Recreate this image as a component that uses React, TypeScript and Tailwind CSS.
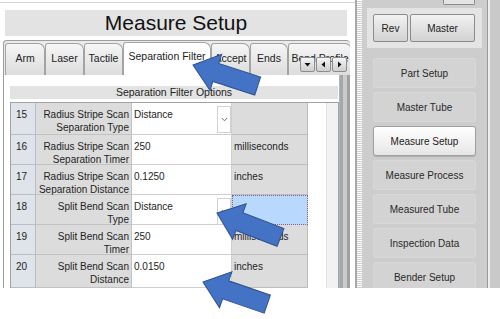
import React from 'react'

type Row = {
  n: number
  label: [string, string]
  value: string
  unit: string
  dropdown?: boolean
  focused?: boolean
}

const rows: Row[] = [
  { n: 15, label: ['Radius Stripe Scan', 'Separation Type'], value: 'Distance', unit: '', dropdown: true },
  { n: 16, label: ['Radius Stripe Scan', 'Separation Timer'], value: '250', unit: 'milliseconds' },
  { n: 17, label: ['Radius Stripe Scan', 'Separation Distance'], value: '0.1250', unit: 'inches' },
  { n: 18, label: ['Split Bend Scan', 'Type'], value: 'Distance', unit: '', dropdown: true, focused: true },
  { n: 19, label: ['Split Bend Scan', 'Timer'], value: '250', unit: 'milliseconds' },
  { n: 20, label: ['Split Bend Scan', 'Distance'], value: '0.0150', unit: 'inches' },
]

const tabs = [
  { name: 'Arm', w: 'w-[40px]' },
  { name: 'Laser', w: 'w-[39px]' },
  { name: 'Tactile', w: 'w-[39px]' },
  { name: 'Separation Filter', w: 'w-[88px]', active: true },
  { name: 'Accept', w: 'w-[39px]' },
  { name: 'Ends', w: 'w-[38px]' },
  { name: 'Bend Profile', w: 'w-[64px]' },
]

const navItems = [
  'Part Setup',
  'Master Tube',
  'Measure Setup',
  'Measure Process',
  'Measured Tube',
  'Inspection Data',
  'Bender Setup',
]

function Chevron() {
  return (
    <svg width="7" height="5" viewBox="0 0 7 5" className="text-[#707070]">
      <path d="M0.8 1 L3.5 3.8 L6.2 1" fill="none" stroke="currentColor" strokeWidth="1" />
    </svg>
  )
}

function Arrow({ x, y, angle }: { x: number; y: number; angle: number }) {
  return (
    <polygon
      points="0,0 24,-19 24,-9.5 68,-9.5 68,9.5 24,9.5 24,19"
      transform={`translate(${x} ${y}) rotate(${angle})`}
      fill="#4472c4"
      stroke="#2f528f"
      strokeWidth="1"
      strokeLinejoin="miter"
    />
  )
}

function TableRow({ row, last }: { row: Row; last: boolean }) {
  const h = row.n === 15 ? 'h-[32px]' : last ? 'h-[33px]' : 'h-[30px]'
  return (
    <div className={`flex ${h} shrink-0 text-[10px] leading-[13px] text-[#1e1e1e]`}>
      <div className="w-[25px] shrink-0 border-r border-b border-[#b9bec6] bg-[#dfe4eb] pl-[5px] pt-[5px]">
        {row.n}
      </div>
      <div className="w-[96px] shrink-0 border-r border-b border-[#c2c2c2] bg-[#dcdcdc] pr-[2px] pt-[5px] text-right">
        <div>{row.label[0]}</div>
        <div>{row.label[1]}</div>
      </div>
      <div className="relative w-[100px] shrink-0 border-r border-b border-[#cfcfcf] bg-white pl-[2px] pt-[5px]">
        {row.value}
        {row.dropdown && (
          <div className="absolute right-0 top-[3px] flex h-[27px] w-[14px] items-center justify-center border border-[#d2d2d2] bg-white">
            <Chevron />
          </div>
        )}
      </div>
      {row.focused ? (
        <div className="w-[76px] shrink-0 border border-dotted border-[#8c5c8c] bg-[#b8d9fd]" />
      ) : (
        <div className="w-[76px] shrink-0 border-r border-b border-[#bdbdbd] bg-[#dcdcdc] pl-[2px] pt-[5px]">
          {row.unit}
        </div>
      )}
    </div>
  )
}

export default function App() {
  return (
    <div className="relative h-[319px] w-[500px] overflow-hidden bg-white font-['Liberation_Sans',Arial,sans-serif] text-[#222]">
      <div className="flex h-[288px] overflow-hidden">
        {/* main panel */}
        <div className="flex w-[357px] shrink-0 flex-col border-r-2 border-[#a9a9a9]">
          <div className="mt-[2px] h-px w-full shrink-0 bg-[#d4d4d4]" />
          <div className="ml-[5px] mt-[7px] flex h-[26px] w-[342px] shrink-0 items-center justify-center bg-[#e3e3e3] text-[21px] text-[#111]">
            Measure Setup
          </div>

          {/* tab control */}
          <div className="relative ml-[3px] mt-[4px] flex w-[347px] flex-1 flex-col rounded-t-[4px] border-l border-t border-[#9d9d9d] bg-[#ebebeb]">
            <div className="flex h-[34px] shrink-0 items-end overflow-hidden pl-[1px]">
              {tabs.map((t) => (
                <div
                  key={t.name}
                  className={`${t.w} shrink-0 ${
                    t.active
                      ? 'h-[33px] bg-white pb-[4px]'
                      : 'h-[32px] bg-[linear-gradient(to_bottom,#f6f6f6,#dcdcdc)] pb-[1px]'
                  } flex items-center justify-center whitespace-nowrap rounded-tl-[3px] rounded-tr-[7px] border border-b-0 border-[#a3a3a3] text-[10.5px] text-[#222]`}
                >
                  {t.name}
                </div>
              ))}
            </div>

            {/* tab scroll buttons */}
            <div className="absolute left-[296px] top-[16px] flex gap-px">
              {['down', 'left', 'right'].map((d) => (
                <div
                  key={d}
                  className="flex h-[15px] w-[15px] items-center justify-center rounded-[2px] border border-[#8d8d8d] bg-[linear-gradient(to_bottom,#f4f4f4,#cfcfcf)]"
                >
                  <svg width="7" height="7" viewBox="0 0 7 7">
                    {d === 'down' && <polygon points="0.5,2 6.5,2 3.5,5.5" fill="#111" />}
                    {d === 'left' && <polygon points="5,0.5 5,6.5 1.5,3.5" fill="#111" />}
                    {d === 'right' && <polygon points="2,0.5 2,6.5 5.5,3.5" fill="#111" />}
                  </svg>
                </div>
              ))}
            </div>

            {/* tab page */}
            <div className="flex flex-1">
              <div className="flex w-[335px] flex-col bg-white">
                <div className="ml-[6px] mt-[11px] h-[13px] w-[328px] shrink-0 bg-[#e3e3e3] text-center text-[10.5px] leading-[13px] text-[#222]">
                  Separation Filter Options
                </div>
                <div className="ml-[6px] mt-[3px] flex w-[329px] flex-1 border-l border-r border-t border-[#a2a2a2]">
                  <div className="flex w-[297px] shrink-0 flex-col">
                    {rows.map((r, i) => (
                      <TableRow key={r.n} row={r} last={i === rows.length - 1} />
                    ))}
                  </div>
                  <div className="w-[18px] shrink-0 bg-white" />
                  <div className="w-[12px] shrink-0 border-l border-[#e2e2e2] bg-[#f2f2f2]" />
                </div>
              </div>
              <div className="w-[11px] shrink-0 bg-[linear-gradient(to_right,#a9b6c4_0,#a9b6c4_1px,#a7a7a7_1px,#a7a7a7_4px,#cbcbcb_4px,#cbcbcb_8px,#a0a0a0_8px,#a0a0a0_11px)]" />
            </div>
          </div>
        </div>

        {/* splitter */}
        <div className="w-[5px] shrink-0 bg-[repeating-linear-gradient(to_bottom,#ffffff_0,#ffffff_1px,#d0d0d0_1px,#d0d0d0_2px)]" />

        {/* side bar */}
        <div className="flex w-[125px] shrink-0 flex-col bg-[#cdcdcd]">
          <div className="ml-[81px] h-[5px] w-[32px] shrink-0 rounded-b-[2px] border border-t-0 border-[#8c8c8c] bg-[#e4e4e4]" />
          <div className="ml-[5px] mt-[3px] flex h-[40px] w-[115px] shrink-0 items-center gap-[2px] bg-[#e4e4e4] pl-[6px]">
            <button className="flex h-[28px] w-[35px] items-center justify-center rounded-[2px] border border-[#8c8c8c] bg-[linear-gradient(to_bottom,#f2f2f2,#d2d2d2)] text-[10px] text-[#222]">
              Rev
            </button>
            <button className="flex h-[28px] w-[65px] items-center justify-center rounded-[2px] border border-[#8c8c8c] bg-[linear-gradient(to_bottom,#f2f2f2,#d2d2d2)] text-[10px] text-[#222]">
              Master
            </button>
          </div>
          <div className="ml-[11px] mt-[10px] flex w-[103px] shrink-0 flex-col gap-[4px]">
            {navItems.map((item) =>
              item === 'Measure Setup' ? (
                <div
                  key={item}
                  className="flex h-[30px] shrink-0 items-center justify-center rounded-[3px] border border-[#a0a0a0] bg-[linear-gradient(to_bottom,#ffffff,#e6e6e6)] text-[10px] text-[#222] shadow-[0_1px_1px_rgba(0,0,0,0.15)]"
                >
                  {item}
                </div>
              ) : (
                <div
                  key={item}
                  className="flex h-[30px] shrink-0 items-center justify-center rounded-[2px] border border-[#d8d8d8] bg-[#d3d3d3] text-[10px] text-[#2a2a2a]"
                >
                  {item}
                </div>
              ),
            )}
          </div>
        </div>

        {/* right edge */}
        <div className="w-[13px] shrink-0 bg-[linear-gradient(to_right,#9a9a9a_0,#9a9a9a_1px,#eeeeee_1px,#eeeeee_3px,#c9c9c9_3px)]" />
      </div>

      {/* callout arrows */}
      <svg className="pointer-events-none absolute left-0 top-0" width="500" height="319" viewBox="0 0 500 319">
        <Arrow x={193} y={65} angle={18} />
        <Arrow x={217} y={213} angle={21} />
        <Arrow x={203} y={282} angle={19} />
      </svg>
    </div>
  )
}
